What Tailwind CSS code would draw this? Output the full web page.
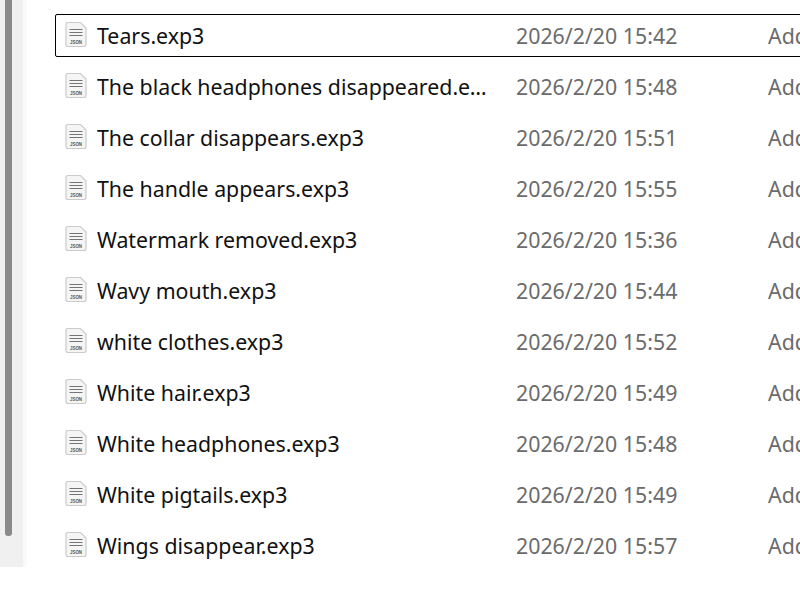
<!DOCTYPE html>
<html lang="en">
<head>
    <meta charset="UTF-8">
    <title>Files</title>
    <script src="https://cdn.jsdelivr.net/npm/@tailwindcss/browser@4"></script>
</head>
<body class="bg-white overflow-hidden">
    <div class="w-[800px] h-[598px] overflow-hidden font-['Noto_Sans',sans-serif]">
        <div class="flex h-[567px]">
            <!-- scrollbar -->
            <div class="w-[23px] bg-[#f0f0f0] pl-[5px]">
                <div class="w-[7px] h-[536px] bg-[#8a8a8a] rounded-b-[3px]"></div>
            </div>
            <div class="w-[4px] bg-[#fafafa]"></div>

            <!-- file rows -->
            <div class="w-[773px] pl-[28px] pt-[14px] flex flex-col gap-[8px]" id="rows"></div>
        </div>
    </div>

    <script>
        const files = [
            ["Tears.exp3", "2026/2/20 15:42"],
            ["The black headphones disappeared.exp3", "2026/2/20 15:48"],
            ["The collar disappears.exp3", "2026/2/20 15:51"],
            ["The handle appears.exp3", "2026/2/20 15:55"],
            ["Watermark removed.exp3", "2026/2/20 15:36"],
            ["Wavy mouth.exp3", "2026/2/20 15:44"],
            ["white clothes.exp3", "2026/2/20 15:52"],
            ["White hair.exp3", "2026/2/20 15:49"],
            ["White headphones.exp3", "2026/2/20 15:48"],
            ["White pigtails.exp3", "2026/2/20 15:49"],
            ["Wings disappear.exp3", "2026/2/20 15:57"]
        ];

        const icon = `<svg class="w-[22px] h-[26px] shrink-0 mb-[3px]" viewBox="0 0 22 26">
            <path d="M1 3.5Q1 1.5 3 1.5H15.5L21 7V23.5Q21 25.5 19 25.5H3Q1 25.5 1 23.5Z" fill="#f5f5f5" stroke="#cbcbcb" stroke-width="1.2"/>
            <path d="M4.5 8.5H17.5M4.5 11.5H17.5M4.5 14.5H17.5" stroke="#757575"/>
            <text x="5" y="22.5" font-size="6" font-weight="700" fill="#555" font-family="Liberation Sans" textLength="12" lengthAdjust="spacingAndGlyphs">JSON</text>
        </svg>`;

        document.getElementById('rows').innerHTML = files.map((file, i) => `
            <div class="h-[43px] w-[760px] shrink-0 flex items-center border rounded-[2px] pl-[9px] ${i === 0 ? 'border-black' : 'border-transparent'}">
                ${icon}
                <span class="ml-[10px] w-[390px] truncate text-[21.33px] text-[#111]">${file[0]}</span>
                <span class="ml-[29px] w-[252px] shrink-0 text-[21.33px] text-[#6b6b6b]">${file[1]}</span>
                <span class="text-[21.33px] text-[#6b6b6b]">Add</span>
            </div>`).join('');
    </script>
</body>
</html>
